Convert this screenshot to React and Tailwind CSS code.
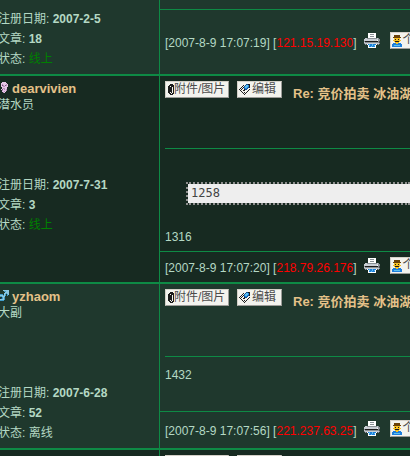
import React from 'react';

const COLORS = {
    w: '#ffffff', k: '#1c1c1c', g: '#8a9196', l: '#c9ced4', d: '#4a5056',
    b: '#1e7fdc', c: '#5cc0ee', n: '#0d4f94', y: '#f8c020', o: '#6a4208',
    p: '#e6c6e6', q: '#b78fbb', m: '#73527a', t: '#8cc8e0', s: '#3f9cc8',
};

const PRINTER = [
    '....wwwwwwww....',
    '....wwggggww....',
    '....wwwwwwww....',
    '....wwggggww....',
    '....wwwwwwww....',
    '.llgggggggggglg.',
    'llllllllllllllgg',
    'lllllllllllllwgg',
    'gkkkkkkkkkkkkkgd',
    'lggggggggggggggd',
    'gllllllllllllllg',
    '.gdwbcbbcbbbwdg.',
    '....wcbbcbcw....',
    '....wbbcbbbw....',
    '....wwwwwwww....',
];

const PERSON = [
    '..oooooo...',
    '..oooooo...',
    '.oooooooo..',
    '..yyyyyy...',
    '..ykyyky...',
    '.yyyyyyyy..',
    '..ykkkky...',
    '...yyyy....',
    '.bbbyybbb..',
    'bbbbbbbbbb.',
    'bbccccccbb.',
    'bbbbbbbbbb.',
];

const CLIP = [
    '...kkk.',
    '..kkkkk',
    '.kk.kkk',
    '.kkkk.k',
    '.kkkk.k',
    '.kkkk.k',
    '.kkkk.k',
    '.kkkk.k',
    '.kk.k.k',
    '..kk.kk',
    '...kkk.',
];

const PEN = [
    '.......nnkk.',
    '....k.nccbk.',
    '...k.ncccbk.',
    '..k.kbccbnk.',
    '.k.k.nbbn...',
    'k.k..knn..k.',
    '.k..kk...k..',
    '..k.....k...',
    '...k.k.k....',
    '....k.k.....',
    '.....k......',
];

const FEMALE = [
    '....pppp...',
    '...pppppp..',
    '...pqpppqp.',
    '...pmqpmqp.',
    '...ppqqppp.',
    '....ppppp..',
    '....pqqpp..',
    '...pmpqpq..',
    '....qpppq..',
    '....ppqp...',
    '.....qp....',
];

const MALE = [
    '.....tttttt',
    '......ssttt',
    '.......tttt',
    '......ttstt',
    '.ssss.ts.st',
    'sttttsts.s.',
    'ttssttt....',
    'ts..sts....',
    'tt.nsts....',
    'sttttts....',
    '.sssss.....',
];

const PixelIcon = ({ rows, className }) => (
    <svg
        aria-hidden="true"
        width={rows[0].length}
        height={rows.length}
        viewBox={`0 0 ${rows[0].length} ${rows.length}`}
        shapeRendering="crispEdges"
        className={`shrink-0 ${className || ''}`}
    >
        {rows.map((row, y) =>
            row.split('').map((c, x) =>
                c === '.' ? null : <rect key={`${x}-${y}`} x={x} y={y} width="1" height="1" fill={COLORS[c]} />
            )
        )}
    </svg>
);

const SmallButton = ({ icon, label, className }) => (
    <button
        type="button"
        className={`flex h-[17px] shrink-0 items-center border border-t-[#d4d0c8] border-l-[#d4d0c8] border-r-[#9c9c98] border-b-[#9c9c98] bg-[#f3f3ee] pl-[1px] text-[12px] leading-[15px] whitespace-nowrap text-[#4c4c4c] ${className || ''}`}
    >
        <PixelIcon rows={icon} />
        {label}
    </button>
);

const Stats = ({ date, count, online }) => (
    <div className="leading-5">
        <p>注册日期: <b>{date}</b></p>
        <p>文章: <b>{count}</b></p>
        <p>状态: <span className={online ? 'text-[#008000]' : ''}>{online ? '线上' : '离线'}</span></p>
    </div>
);

const Toolbar = ({ title }) => (
    <div className="flex h-[72px] items-start pt-[5px] pl-[5px]">
        <SmallButton icon={CLIP} label="附件/图片" className="w-16" />
        <SmallButton icon={PEN} label="编辑" className="ml-2 w-[45px] gap-[1px]" />
        {title && (
            <h2 className="mt-[5px] ml-[11px] text-[13px] leading-4 font-bold whitespace-nowrap text-[#e4c188]">{title}</h2>
        )}
    </div>
);

const PostFooter = ({ time, ip }) => (
    <div className="flex min-h-[31px] flex-1 items-center overflow-hidden border-t border-[#0e8a45] pb-[3px] pl-[5px] whitespace-nowrap">
        <span className="pt-1 leading-4">
            [{time}] [<a href="#ip" className="text-[#ff0000]">{ip}</a>]
        </span>
        <button type="button" aria-label="打印" className="ml-[7px] shrink-0">
            <PixelIcon rows={PRINTER} className="block" />
        </button>
        <SmallButton icon={PERSON} label="个人" className="ml-[10px]" />
    </div>
);

const Post = ({ dark, side, children }) => (
    <article className={`flex border-b-2 border-[#0e8a45] ${dark ? 'bg-[#172a21]' : 'bg-[#1f382d]'}`}>
        <div className="w-[159px] shrink-0 pb-[5px]">
            <div className="-ml-0.5">{side}</div>
        </div>
        <div className="flex min-w-0 flex-1 flex-col overflow-hidden border-l border-[#0e8a45]">{children}</div>
    </article>
);

const Author = ({ icon, name, rank, ...stats }) => (
    <>
        <div className="mb-[62px] pt-[5px] leading-4">
            <div className="flex gap-[3px]">
                <PixelIcon rows={icon} className="mt-[1px]" />
                <a href="#user" className="text-[13px] font-bold text-[#e4c188]">{name}</a>
            </div>
            <p>{rank}</p>
        </div>
        <Stats {...stats} />
    </>
);

const TITLE = 'Re: 竞价拍卖 冰油湖';

const App = () => {
    return (
        <main className="h-screen overflow-hidden bg-[#172a21] font-['Liberation_Sans','Noto_Sans_CJK_SC',sans-serif] text-[12px] text-[#b4d8c4]">
            <Post side={<div className="pt-[9px]"><Stats date="2007-2-5" count="18" online /></div>}>
                <div className="h-[9px]" />
                <PostFooter time="2007-8-9 17:07:19" ip="121.15.19.130" />
            </Post>

            <Post
                dark
                side={<Author icon={FEMALE} name="dearvivien" rank="潜水员" date="2007-7-31" count="3" online />}
            >
                <Toolbar title={TITLE} />
                <div className="ml-[5px] border-t border-[#0e8a45] pt-[33px] pb-[6px] leading-4">
                    <pre className="mb-6 ml-[21px] border-2 border-r-0 border-dotted border-[#8e8e8e] bg-[#eeeeee] bg-clip-padding pl-[3px] font-['DejaVu_Sans_Mono',monospace] text-[12px] leading-[19px] text-[#444444]">1258</pre>
                    <p>1316</p>
                </div>
                <PostFooter time="2007-8-9 17:07:20" ip="218.79.26.176" />
            </Post>

            <Post side={<Author icon={MALE} name="yzhaom" rank="大副" date="2007-6-28" count="52" />}>
                <Toolbar title={TITLE} />
                <div className="ml-[5px] border-t border-[#0e8a45] pt-[10px] pb-7 leading-4">
                    <p>1432</p>
                </div>
                <PostFooter time="2007-8-9 17:07:56" ip="221.237.63.25" />
            </Post>

            <Post dark side={null}>
                <Toolbar />
            </Post>
        </main>
    );
};

export default App;
